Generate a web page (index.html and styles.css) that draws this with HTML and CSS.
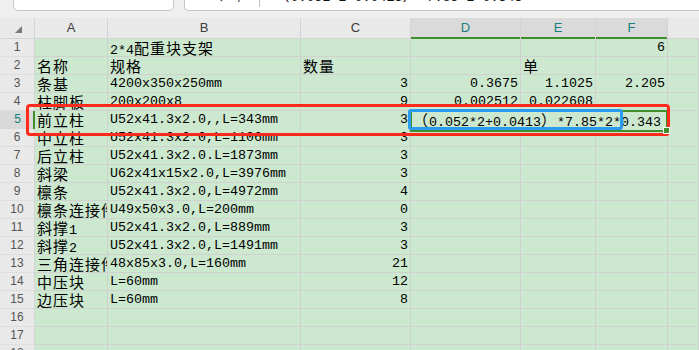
FILE: index.html
```html
<!DOCTYPE html>
<html>
<head>
<meta charset="utf-8">
<link rel="stylesheet" href="styles.css">
</head>
<body>
<div class="topbar">
  <div class="namebox">D5</div>
  <div class="fbox">
    <svg class="mag" width="16" height="14" viewBox="0 0 16 14"><circle cx="6" cy="5" r="5" fill="none" stroke="#555" stroke-width="1.3"/><line x1="9.6" y1="8.6" x2="14" y2="13" stroke="#555" stroke-width="1.4"/></svg>
    <span class="fx">fx</span>
    <span class="sep"></span>
    <span class="ftext"><span class="k">（</span>0.052*2+0.0413<span class="k">）</span>*7.85*2*0.343</span>
  </div>
</div>
<div class="sheet">
  <div class="row hdr">
    <div class="corner"><svg width="7" height="7" viewBox="0 0 7 7"><polygon points="7,0 7,7 0,7" fill="#7a7a7a"/></svg></div>
    <div class="hc">A</div><div class="hc">B</div><div class="hc">C</div>
    <div class="hc sel">D</div><div class="hc sel">E</div><div class="hc sel">F</div><div class="hc last"></div>
  </div>
  <div class="row"><div class="rh">1</div><div class="c"></div><div class="c">2*4<span class="k">配重块支架</span></div><div class="c"></div><div class="c"></div><div class="c"></div><div class="c n">6</div><div class="c"></div></div>
  <div class="row"><div class="rh">2</div><div class="c"><span class="k">名称</span></div><div class="c"><span class="k">规格</span></div><div class="c"><span class="k">数量</span></div><div class="c"></div><div class="c"><span class="k">单</span></div><div class="c"></div><div class="c"></div></div>
  <div class="row"><div class="rh">3</div><div class="c"><span class="k">条基</span></div><div class="c">4200x350x250mm</div><div class="c n">3</div><div class="c n">0.3675</div><div class="c n">1.1025</div><div class="c n">2.205</div><div class="c"></div></div>
  <div class="row"><div class="rh">4</div><div class="c"><span class="k">柱脚板</span></div><div class="c">200x200x8</div><div class="c n">9</div><div class="c n">0.002512</div><div class="c n">0.022608</div><div class="c"></div><div class="c"></div></div>
  <div class="row"><div class="rh cur">5</div><div class="c"><span class="k">前立柱</span></div><div class="c">U52x41.3x2.0,,L=343mm</div><div class="c n">3</div><div class="c merged"><span class="k">（</span>0.052*2+0.0413<span class="k">）</span>*7.85*2*0.343</div><div class="c"></div></div>
  <div class="row"><div class="rh">6</div><div class="c"><span class="k">中立柱</span></div><div class="c">U52x41.3x2.0,L=1106mm</div><div class="c n">3</div><div class="c"></div><div class="c"></div><div class="c"></div><div class="c"></div></div>
  <div class="row"><div class="rh">7</div><div class="c"><span class="k">后立柱</span></div><div class="c">U52x41.3x2.0.L=1873mm</div><div class="c n">3</div><div class="c"></div><div class="c"></div><div class="c"></div><div class="c"></div></div>
  <div class="row"><div class="rh">8</div><div class="c"><span class="k">斜梁</span></div><div class="c">U62x41x15x2.0,L=3976mm</div><div class="c n">3</div><div class="c"></div><div class="c"></div><div class="c"></div><div class="c"></div></div>
  <div class="row"><div class="rh">9</div><div class="c"><span class="k">檩条</span></div><div class="c">U52x41.3x2.0,L=4972mm</div><div class="c n">4</div><div class="c"></div><div class="c"></div><div class="c"></div><div class="c"></div></div>
  <div class="row"><div class="rh">10</div><div class="c"><span class="k">檩条连接件</span></div><div class="c">U49x50x3.0,L=200mm</div><div class="c n">0</div><div class="c"></div><div class="c"></div><div class="c"></div><div class="c"></div></div>
  <div class="row"><div class="rh">11</div><div class="c"><span class="k">斜撑</span>1</div><div class="c">U52x41.3x2.0,L=889mm</div><div class="c n">3</div><div class="c"></div><div class="c"></div><div class="c"></div><div class="c"></div></div>
  <div class="row"><div class="rh">12</div><div class="c"><span class="k">斜撑</span>2</div><div class="c">U52x41.3x2.0,L=1491mm</div><div class="c n">3</div><div class="c"></div><div class="c"></div><div class="c"></div><div class="c"></div></div>
  <div class="row"><div class="rh">13</div><div class="c"><span class="k">三角连接件</span></div><div class="c">48x85x3.0,L=160mm</div><div class="c n">21</div><div class="c"></div><div class="c"></div><div class="c"></div><div class="c"></div></div>
  <div class="row"><div class="rh">14</div><div class="c"><span class="k">中压块</span></div><div class="c">L=60mm</div><div class="c n">12</div><div class="c"></div><div class="c"></div><div class="c"></div><div class="c"></div></div>
  <div class="row"><div class="rh">15</div><div class="c"><span class="k">边压块</span></div><div class="c">L=60mm</div><div class="c n">8</div><div class="c"></div><div class="c"></div><div class="c"></div><div class="c"></div></div>
  <div class="row"><div class="rh">16</div><div class="c"></div><div class="c"></div><div class="c"></div><div class="c"></div><div class="c"></div><div class="c"></div><div class="c"></div></div>
  <div class="row"><div class="rh">17</div><div class="c"></div><div class="c"></div><div class="c"></div><div class="c"></div><div class="c"></div><div class="c"></div><div class="c"></div></div>
  <div class="row"><div class="rh">18</div><div class="c"></div><div class="c"></div><div class="c"></div><div class="c"></div><div class="c"></div><div class="c"></div><div class="c"></div></div>
</div>
<div class="note redbox"></div>
<div class="note bluebox"></div>
</body>
</html>
```

FILE: styles.css
```css
html, body {
  margin: 0;
  padding: 0;
  width: 699px;
  height: 350px;
  overflow: hidden;
  background: #efefef;
}

.topbar {
  display: flex;
  align-items: flex-start;
  height: 18px;
  overflow: hidden;
}

.namebox {
  margin: -20px 0 0 13px;
  width: 161px;
  height: 31px;
  box-sizing: border-box;
  border: 1px solid #c6c6c6;
  border-radius: 5px;
  background: #fff;
  text-align: center;
  font: 13px "Liberation Sans", sans-serif;
  color: #222;
  padding-top: 6px;
  line-height: 16px;
}

.fbox {
  margin: -20px 0 0 10px;
  flex: 1;
  height: 31px;
  box-sizing: border-box;
  border: 1px solid #c6c6c6;
  border-right: 0;
  border-radius: 5px 0 0 5px;
  background: #fff;
  display: flex;
  align-items: flex-start;
}

.mag {
  margin: 7px 0 0 23px;
}

.fx {
  margin: 6px 0 0 14px;
  font: italic 13px "Liberation Serif", serif;
  line-height: 16px;
  color: #333;
}

.sep {
  margin: 0 0 0 12px;
  width: 1px;
  height: 26px;
  background: #bdbdbd;
}

.ftext {
  margin: 6px 0 0 14px;
  font: 13.33px "Liberation Mono", monospace;
  line-height: 16px;
  color: #111;
  white-space: nowrap;
}

.sheet {
  display: flex;
  flex-direction: column;
}

.row {
  display: grid;
  grid-template-columns: 35px 73px 193px 110px 110px 75px 72px 1fr;
  height: 18px;
}

.row.hdr {
  height: 21px;
}

.corner {
  background: #e9e9e9;
  border-right: 1px solid #d4d4d4;
  border-bottom: 1px solid #d4d4d4;
  box-sizing: border-box;
  display: flex;
  align-items: center;
  justify-content: center;
  padding: 2px 0 0 2px;
}

.hc {
  background: #e9e9e9;
  border-right: 1px solid #d4d4d4;
  border-bottom: 1px solid #d4d4d4;
  box-sizing: border-box;
  text-align: center;
  font: 13px "Liberation Sans", sans-serif;
  line-height: 20px;
  color: #3c3c3c;
}

.hc.sel {
  background: #dadada;
  color: #17807a;
  border-bottom: 0;
  box-shadow: inset 0 -2px #3f8f2c;
}

.hc.last {
  border-right: 0;
}

.rh {
  background: #e9e9e9;
  border-right: 1px solid #d4d4d4;
  border-bottom: 1px solid #dedede;
  box-sizing: border-box;
  text-align: center;
  font: 12px "Liberation Sans", sans-serif;
  line-height: 17px;
  color: #555;
}

.rh.cur {
  background: #d9d9d9;
  color: #17807a;
  border-right: 0;
  box-shadow: inset -2px 0 #3f8f2c;
}

.c {
  background: #cce8cf;
  border-right: 1px solid #cfd2cf;
  border-bottom: 1px solid #cfd2cf;
  box-sizing: border-box;
  padding: 1px 2px 0;
  overflow: hidden;
  white-space: nowrap;
  font: 13.33px "Liberation Mono", monospace;
  line-height: 16px;
  color: #000;
}

.c.n {
  text-align: right;
}

.k {
  font: 15px "Noto Sans CJK SC", sans-serif;
  letter-spacing: 1px;
  line-height: 16px;
}

.c.merged {
  grid-column: span 3;
  position: relative;
  overflow: visible;
}

.c.merged::after {
  content: "";
  position: absolute;
  left: -1px;
  top: -1px;
  right: -1px;
  bottom: -1px;
  border: 2px solid #3f8f2c;
}

.c.merged::before {
  content: "";
  position: absolute;
  right: -3px;
  bottom: -3px;
  width: 5px;
  height: 5px;
  background: #3f8f2c;
  border: 1px solid #fff;
  z-index: 1;
}

.note {
  position: absolute;
  box-sizing: border-box;
}

.redbox {
  left: 26px;
  top: 104px;
  width: 644px;
  height: 32px;
  border: 3px solid #ff2a1c;
  border-radius: 4px;
}

.bluebox {
  left: 408px;
  top: 109px;
  width: 215px;
  height: 21px;
  border: 3px solid #2a9bf0;
  border-radius: 3px;
}
```
